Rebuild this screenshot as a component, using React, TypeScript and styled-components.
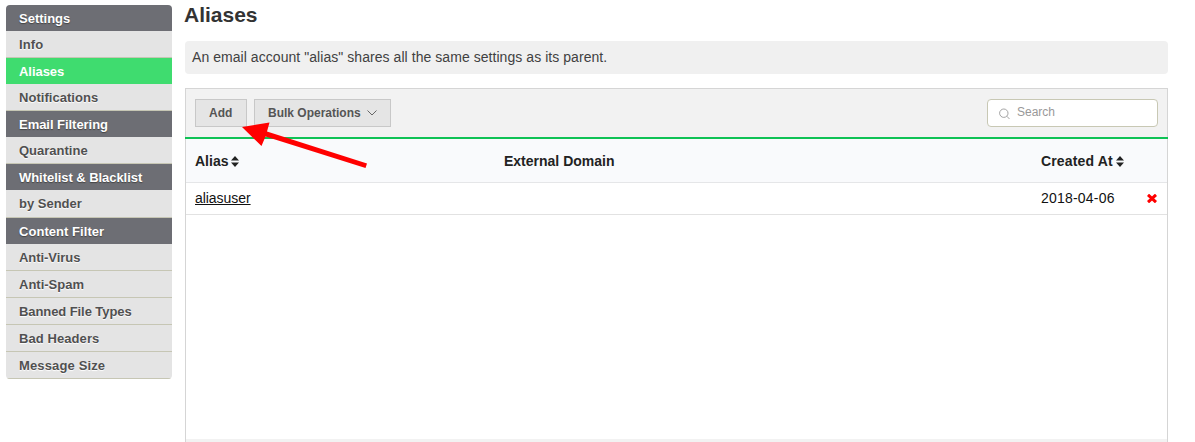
import React from "react";
import styled, { createGlobalStyle } from "styled-components";

const GlobalStyle = createGlobalStyle`
  * { box-sizing: border-box; }
  html, body { margin: 0; height: 442px; overflow: hidden; }
  body {
    background: #fff;
    font-family: "Liberation Sans", Helvetica, Arial, sans-serif;
    font-size: 14px;
    color: #111;
  }
`;

const Page = styled.div`
  position: relative;
  display: flex;
  align-items: flex-start;
  gap: 12px;
  width: 1195px;
  height: 442px;
  padding-left: 6px;
  overflow: hidden;
`;

const Sidebar = styled.nav`
  width: 166px;
  margin-top: 5px;
  border-radius: 4px;
  overflow: hidden;
  font-size: 13px;
  font-weight: bold;
`;

const SidebarHeading = styled.div`
  height: 26px;
  padding-left: 13px;
  line-height: 27px;
  background: #6d6e74;
  color: #fff;
  text-shadow: 0 1px 1px #444;
`;

const SidebarItem = styled.div<{ $active?: boolean; $height?: number }>`
  height: ${(p) => (p.$active ? 26 : p.$height ?? 27)}px;
  padding-left: 13px;
  line-height: 27px;
  background: ${(p) => (p.$active ? "#3fdc6f" : "#e4e4e4")};
  color: ${(p) => (p.$active ? "#fff" : "#505050")};
  text-shadow: ${(p) => (p.$active ? "none" : "0 1px 1px #fff")};
  border-bottom: ${(p) => (p.$active ? "none" : "1px solid #c6c6b4")};
`;

const Label = styled.span<{ $spacing?: number }>`
  letter-spacing: ${(p) => p.$spacing ?? 0}px;
  white-space: nowrap;
`;

const Main = styled.main`
  width: 984px;
`;

const Title = styled.h1`
  margin: 0;
  height: 41px;
  padding-top: 2px;
  font-size: 21px;
  line-height: 26px;
  color: #333;
`;

const Notice = styled.p`
  margin: 0 0 14px 1px;
  height: 33px;
  padding-left: 7px;
  line-height: 32px;
  border-radius: 4px;
  background: #f0f0f0;
  color: #414141;
`;

const Panel = styled.section`
  height: 360px;
  margin-left: 1px;
  width: 983px;
  border: 1px solid #d5d5d5;
`;

const Toolbar = styled.div`
  display: flex;
  gap: 7px;
  height: 48px;
  padding: 10px 9px 0;
  background: #f2f2f2;
`;

const GreenRule = styled.div`
  height: 2px;
  margin: 0 -1px;
  background: #0fc255;
`;

const Button = styled.button<{ $width: number }>`
  display: flex;
  align-items: center;
  width: ${(p) => p.$width}px;
  height: 28px;
  margin: 0;
  padding: 0 0 1px 13px;
  gap: 6px;
  border: 1px solid #c8c8c8;
  background: #e5e5e5;
  color: #555;
  font: bold 12px "Liberation Sans", Arial, sans-serif;
`;

const SearchBox = styled.div`
  display: flex;
  width: 171px;
  height: 28px;
  margin-left: auto;
  padding-left: 11px;
  border: 1px solid #c8c8b4;
  border-radius: 4px;
  background: #fff;
  color: #999;
  font-size: 12px;
  line-height: 25px;
  gap: 7px;
  svg { margin-top: 8px; }
`;

const Table = styled.div`
  display: grid;
  grid-template-columns: 309px 537px 105px 30px;
`;

const HeaderCell = styled.div`
  height: 44px;
  padding-left: 9px;
  line-height: 44px;
  font-weight: bold;
  color: #222;
  background: #f9fafc;
  border-bottom: 1px solid #e5e6e8;
  svg { margin-left: 3px; vertical-align: -1px; }
`;

const Cell = styled.div`
  height: 32px;
  padding-left: 9px;
  line-height: 30px;
  border-bottom: 1px solid #e2e2e2;
`;

const AliasLink = styled.a`
  color: #111;
  letter-spacing: -0.05px;
  text-decoration: underline 1px;
  text-underline-offset: 1px;
  text-decoration-skip-ink: none;
`;

const DeleteCell = styled(Cell)`
  padding-left: 10px;
`;

const PanelFooter = styled.div`
  margin-top: 224px;
  height: 30px;
  background: #f2f2f2;
`;

const Pointer = styled.svg`
  position: absolute;
  left: 240px;
  top: 118px;
`;

const SortIcon = () => (
  <svg width="8" height="11" viewBox="0 0 8 11" fill="#222">
    <path d="M4 0 8 4.5H0ZM0 6.5H8L4 11Z" />
  </svg>
);

const menu: { text: string; heading?: boolean; active?: boolean; height?: number; spacing?: number }[] = [
  { text: "Settings", heading: true },
  { text: "Info", spacing: 0.1 },
  { text: "Aliases", active: true, spacing: -0.05 },
  { text: "Notifications", spacing: 0.04 },
  { text: "Email Filtering", heading: true, spacing: -0.04 },
  { text: "Quarantine" },
  { text: "Whitelist & Blacklist", heading: true, spacing: -0.05 },
  { text: "by Sender", height: 28 },
  { text: "Content Filter", heading: true, spacing: 0.05 },
  { text: "Anti-Virus", spacing: -0.05 },
  { text: "Anti-Spam" },
  { text: "Banned File Types", spacing: -0.08 },
  { text: "Bad Headers", spacing: 0.08 },
  { text: "Message Size", spacing: 0.14 },
];

export default function App() {
  return (
    <Page>
      <GlobalStyle />
      <Sidebar>
        {menu.map((m) =>
          m.heading ? (
            <SidebarHeading key={m.text}><Label $spacing={m.spacing}>{m.text}</Label></SidebarHeading>
          ) : (
            <SidebarItem key={m.text} $active={m.active} $height={m.height}>
              <Label $spacing={m.spacing}>{m.text}</Label>
            </SidebarItem>
          )
        )}
      </Sidebar>
      <Main>
        <Title><Label>Aliases</Label></Title>
        <Notice><Label $spacing={0.055}>An email account "alias" shares all the same settings as its parent.</Label></Notice>
        <Panel>
          <Toolbar>
            <Button $width={52}><Label>Add</Label></Button>
            <Button $width={137}>
              <Label>Bulk Operations</Label>
              <svg width="10" height="6" viewBox="0 0 10 6" fill="none" stroke="#666">
                <path d="M.5.5 5 5 9.5.5" />
              </svg>
            </Button>
            <SearchBox>
              <svg width="11" height="12" viewBox="0 0 11 12" fill="none" stroke="#999" strokeWidth=".9">
                <circle cx="4.800" cy="5.200" r="4.200" />
                <path d="M7.800 8.200 10.500 11" />
              </svg>
              <Label>Search</Label>
            </SearchBox>
          </Toolbar>
          <GreenRule />
          <Table>
            <HeaderCell><Label>Alias</Label><SortIcon /></HeaderCell>
            <HeaderCell><Label>External Domain</Label></HeaderCell>
            <HeaderCell><Label $spacing={0.15}>Created At</Label><SortIcon /></HeaderCell>
            <HeaderCell />
            <Cell><AliasLink>aliasuser</AliasLink></Cell>
            <Cell />
            <Cell><Label $spacing={0.2}>2018-04-06</Label></Cell>
            <DeleteCell>
              <svg width="10" height="9" viewBox="0 0 10 9" stroke="#f00" strokeWidth="3">
                <path d="M1 .8 9 8.2M9 .8 1 8.2" />
              </svg>
            </DeleteCell>
          </Table>
          <PanelFooter />
        </Panel>
      </Main>
      <Pointer width="130" height="52" viewBox="240 118 130 52" fill="#f00">
        <path d="M242 127 269.500 122.500 267 131.500 367 163.500 365.500 168 265.500 136.500 261.500 146Z" />
      </Pointer>
    </Page>
  );
}
